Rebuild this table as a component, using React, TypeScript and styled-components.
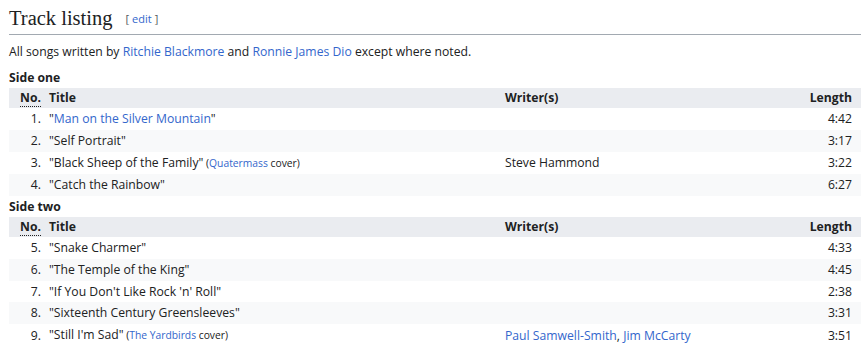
import styled, { createGlobalStyle } from "styled-components";

const GlobalStyle = createGlobalStyle`
  body {
    margin: 0;
    padding: 6px 0 0 9px;
    background: #ffffff;
    color: #202122;
    font-family: "Open Sans", "Noto Sans", sans-serif;
    font-size: 12.2px;
    overflow: hidden;
  }
`;

type Track = {
  no: number;
  title: string;
  titleLink?: boolean;
  cover?: string;
  writers?: string[];
  writersLinked?: boolean;
  length: string;
};

const sideOne: Track[] = [
  { no: 1, title: "Man on the Silver Mountain", titleLink: true, length: "4:42" },
  { no: 2, title: "Self Portrait", length: "3:17" },
  {
    no: 3,
    title: "Black Sheep of the Family",
    cover: "Quatermass",
    writers: ["Steve Hammond"],
    length: "3:22",
  },
  { no: 4, title: "Catch the Rainbow", length: "6:27" },
];

const sideTwo: Track[] = [
  { no: 5, title: "Snake Charmer", length: "4:33" },
  { no: 6, title: "The Temple of the King", length: "4:45" },
  { no: 7, title: "If You Don't Like Rock 'n' Roll", length: "2:38" },
  { no: 8, title: "Sixteenth Century Greensleeves", length: "3:31" },
  {
    no: 9,
    title: "Still I'm Sad",
    cover: "The Yardbirds",
    writers: ["Paul Samwell-Smith", "Jim McCarty"],
    writersLinked: true,
    length: "3:51",
  },
];

const Heading = styled.h2`
  margin: 0;
  padding: 0 0 3px;
  border-bottom: 1px solid #a2a9b1;
  font-family: "Liberation Serif", serif;
  font-size: 20.5px;
  font-weight: normal;
  line-height: 25px;
`;

const EditSection = styled.span`
  margin-left: 13px;
  font-family: "Open Sans", sans-serif;
  font-size: 11px;
  color: #54595d;
  vertical-align: 2px;

  a {
    margin: 0 3px;
  }
`;

const Link = styled.a`
  color: #3366cc;
  text-decoration: none;
`;

const Intro = styled.p`
  margin: 7px 0 5px;
  line-height: 20px;
`;

const SideLabel = styled.div`
  font-weight: bold;
  line-height: 20px;
  padding-top: 0.5px;
`;

const Table = styled.table`
  width: 852px;
  border-collapse: collapse;
  line-height: 17.75px;
`;

const HeadRow = styled.tr`
  background: #eaecf0;
`;

const Row = styled.tr<{ $odd: boolean }>`
  background: ${(p) => (p.$odd ? "#ffffff" : "#f8f9fa")};
`;

const Th = styled.th<{ $align?: string; $w?: string }>`
  padding: 1.5px 4px 1.25px;
  font-weight: bold;
  text-align: ${(p) => p.$align ?? "left"};
  width: ${(p) => p.$w ?? "auto"};

  &:last-child {
    padding-right: 9px;
  }
`;

const Td = styled.td<{ $align?: string }>`
  padding: 2px 4px;
  text-align: ${(p) => p.$align ?? "left"};

  &:last-child {
    padding-right: 9px;
  }
`;

const Abbr = styled.abbr`
  text-decoration: none;
  border-bottom: 1px dotted #202122;
`;

const Note = styled.span`
  font-size: 10.3px;
`;

const TrackTable = ({ tracks }: { tracks: Track[] }) => (
  <Table>
    <thead>
      <HeadRow>
        <Th $align="right" $w="28px">
          <Abbr title="Number">No.</Abbr>
        </Th>
        <Th $w="448px">Title</Th>
        <Th>Writer(s)</Th>
        <Th $align="right" $w="70px">
          Length
        </Th>
      </HeadRow>
    </thead>
    <tbody>
      {tracks.map((t, i) => (
        <Row key={t.no} $odd={i % 2 === 0}>
          <Td $align="right">{t.no}.</Td>
          <Td>
            "{t.titleLink ? <Link href="#">{t.title}</Link> : t.title}"
            {t.cover && (
              <Note>
                {" "}
                (<Link href="#">{t.cover}</Link> cover)
              </Note>
            )}
          </Td>
          <Td>
            {t.writers &&
              t.writers.map((w, j) => (
                <span key={w}>
                  {j > 0 && ", "}
                  {t.writersLinked ? <Link href="#">{w}</Link> : w}
                </span>
              ))}
          </Td>
          <Td $align="right">{t.length}</Td>
        </Row>
      ))}
    </tbody>
  </Table>
);

export default function App() {
  return (
    <>
      <GlobalStyle />
      <Heading>
        Track listing
        <EditSection>
          [<Link href="#">edit</Link>]
        </EditSection>
      </Heading>
      <Intro>
        All songs written by <Link href="#">Ritchie Blackmore</Link> and{" "}
        <Link href="#">Ronnie James Dio</Link> except where noted.
      </Intro>
      <SideLabel>Side one</SideLabel>
      <TrackTable tracks={sideOne} />
      <SideLabel>Side two</SideLabel>
      <TrackTable tracks={sideTwo} />
    </>
  );
}
